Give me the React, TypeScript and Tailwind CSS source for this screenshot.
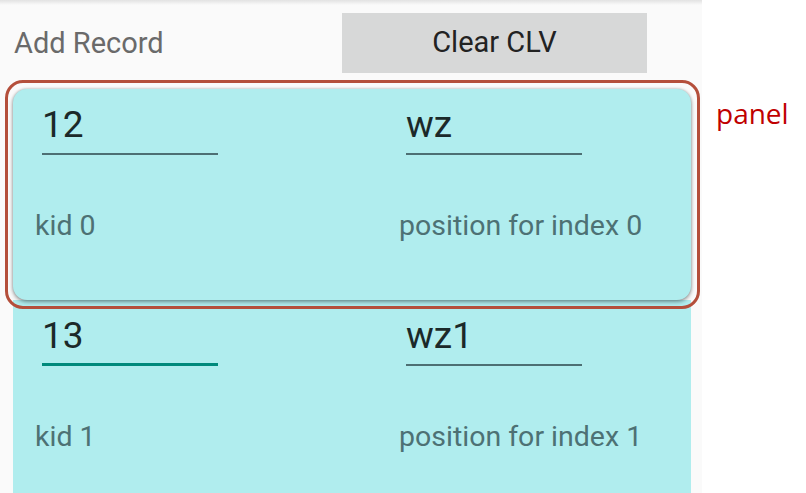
import React from "react";

type Row = { id: string; name: string; kid: string; position: string; focused?: boolean };

const rows: Row[] = [
  { id: "12", name: "wz", kid: "kid 0", position: "position for index 0" },
  { id: "13", name: "wz1", kid: "kid 1", position: "position for index 1", focused: true },
];

function Input({ value, focused }: { value: string; focused?: boolean }) {
  return (
    <div className="w-[176px]">
      <div className="h-[57px] pt-[11px] text-[37px] leading-[44px] text-[#1b2929]">{value}</div>
      <div className={focused ? "mt-[3px] h-[3px] bg-[#00897b]" : "mt-[4px] h-[2px] bg-[#4d6f73]"} />
    </div>
  );
}

function RecordItem({ row, card }: { row: Row; card?: boolean }) {
  return (
    <div
      className={
        card
          ? "h-[211px] rounded-[14px] bg-[#b0edee] shadow-[0_2px_4px_rgba(0,0,0,0.35),0_0_3px_rgba(0,0,0,0.25)]"
          : "h-[211px] bg-[#b0edee]"
      }
    >
      <div className="flex pt-[3px]">
        <div className="ml-[29px] w-[364px]">
          <Input value={row.id} focused={row.focused} />
        </div>
        <Input value={row.name} />
      </div>
      <div className="mt-[56px] flex text-[28.5px] leading-[30px] text-[#4d7174]">
        <div className="ml-[22px] w-[364px]">{row.kid}</div>
        <div>{row.position}</div>
      </div>
    </div>
  );
}

export default function App() {
  return (
    <div className="flex h-[493px] w-[806px] overflow-hidden bg-white font-['Roboto',sans-serif]">
      <div className="relative h-full w-[702px] shrink-0 bg-[#fafafa]">
        <div className="h-[5px] bg-gradient-to-b from-[#e2e2e2] to-[#fafafa]" />
        <div className="mt-[8px] flex h-[60px] items-center">
          <div className="w-[342px] pl-[14px] pt-[2px] text-[29px] text-[#6a6a6a]">Add Record</div>
          <button className="h-[60px] w-[305px] bg-[#d7d8d8] text-[29px] text-[#222]">Clear CLV</button>
        </div>
        <div className="ml-[13px] mt-[16px] w-[678px]">
          <div className="relative">
            <RecordItem row={rows[0]} card />
            <div className="pointer-events-none absolute left-[-8px] top-[-9px] h-[229px] w-[695px] rounded-[18px] border-[3px] border-[#b44f3b]" />
          </div>
          <RecordItem row={rows[1]} />
        </div>
      </div>
      <div className="pl-[14px] pt-[96px] font-['Open_Sans',sans-serif] text-[28px] leading-[34px] text-[#c00000]">panel</div>
    </div>
  );
}
